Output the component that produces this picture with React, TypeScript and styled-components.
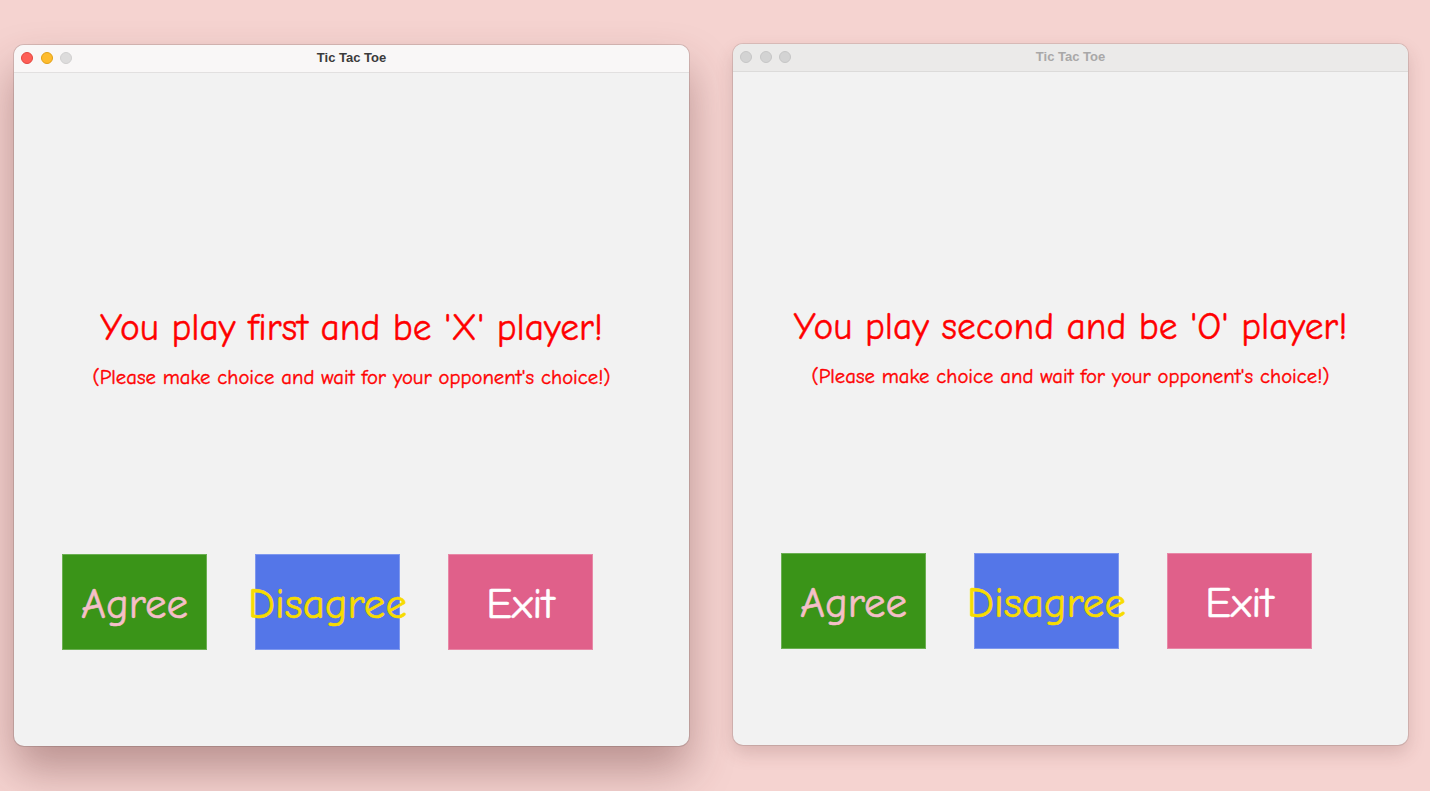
import styled, { createGlobalStyle } from "styled-components"

const GlobalStyle = createGlobalStyle`
  html, body {
    margin: 0;
    padding: 0;
    background: #ffffff;
  }
  body {
    font-family: "Liberation Sans", Arial, sans-serif;
  }
`

const comic = `"Comic Sans MS", "Comic Neue", "DejaVu Sans", sans-serif`

interface WindowProps {
  title: string
  active: boolean
  heading: string
}

function GameWindow({ title, active, heading }: WindowProps) {
  return (
    <Window $active={active}>
      <TitleBar $active={active}>
        <Lights>
          <Light $color={active ? "#fe5f57" : "#d3d3d3"} $border={active ? "#e2463f" : "#c6c6c6"} />
          <Light $color={active ? "#febc2e" : "#d3d3d3"} $border={active ? "#e1a116" : "#c6c6c6"} />
          <Light $color={active ? "#dddcdc" : "#d3d3d3"} $border={active ? "#d0cfcf" : "#c6c6c6"} />
        </Lights>
        <Title $active={active}>{title}</Title>
      </TitleBar>
      <Content>
        <Heading>{heading}</Heading>
        <SubHeading>(Please make choice and wait for your opponent's choice!)</SubHeading>
        <ButtonRow>
          <ChoiceButton $bg="#3a9418" $fg="#f5bfc8">Agree</ChoiceButton>
          <ChoiceButton $bg="#5476e8" $fg="#f7dc00">Disagree</ChoiceButton>
          <ChoiceButton $bg="#e0608a" $fg="#ffffff">Exit</ChoiceButton>
        </ButtonRow>
      </Content>
    </Window>
  )
}

export default function App() {
  return (
    <>
      <GlobalStyle />
      <Desktop>
        <GameWindow title="Tic Tac Toe" active heading="You play first and be 'X' player!" />
        <GameWindow title="Tic Tac Toe" active={false} heading="You play second and be 'O' player!" />
      </Desktop>
    </>
  )
}

const Desktop = styled.div`
  height: 791px;
  box-sizing: border-box;
  background: #f5d3d0;
  display: flex;
  align-items: flex-start;
  gap: 44px;
  padding: 44px 0 0 14px;
  overflow: hidden;
`

const Window = styled.div<{ $active: boolean }>`
  width: 675px;
  height: 701px;
  margin-top: ${(p) => (p.$active ? "1px" : "0")};
  border-radius: 10px;
  overflow: hidden;
  background: #f2f2f2;
  display: flex;
  flex-direction: column;
  flex-shrink: 0;
  box-shadow: ${(p) =>
    p.$active
      ? "0 0 0 1px rgba(0,0,0,0.12), 0 24px 44px rgba(90,40,40,0.38)"
      : "0 0 0 1px rgba(0,0,0,0.1), 0 8px 18px rgba(90,40,40,0.18)"};
`

const TitleBar = styled.div<{ $active: boolean }>`
  height: 27px;
  flex-shrink: 0;
  position: relative;
  display: flex;
  align-items: center;
  justify-content: center;
  background: ${(p) => (p.$active ? "#f9f7f7" : "#ebeae9")};
  border-bottom: 1px solid ${(p) => (p.$active ? "#e2e0e0" : "#dcdbda")};
`

const Lights = styled.div`
  position: absolute;
  left: 7px;
  top: 7px;
  display: flex;
  gap: 7.5px;
`

const Light = styled.span<{ $color: string; $border: string }>`
  width: 12px;
  height: 12px;
  box-sizing: border-box;
  border-radius: 50%;
  background: ${(p) => p.$color};
  border: 0.5px solid ${(p) => p.$border};
`

const Title = styled.div<{ $active: boolean }>`
  font-family: "Liberation Sans", Arial, sans-serif;
  font-weight: 700;
  font-size: 13px;
  margin-top: -2px;
  color: ${(p) => (p.$active ? "#3b3b3b" : "#a9a8a8")};
`

const Content = styled.div`
  flex: 1;
  display: flex;
  flex-direction: column;
  align-items: center;
  padding-top: 233px;
  font-family: ${comic};
  color: #ff0000;
  -webkit-text-stroke: 0.4px currentColor;
`

const Heading = styled.div`
  font-size: 37.4px;
  line-height: 44px;
  white-space: nowrap;
`

const SubHeading = styled.div`
  margin-top: 14px;
  font-size: 20.7px;
  line-height: 26px;
  white-space: nowrap;
`

const ButtonRow = styled.div`
  align-self: stretch;
  display: flex;
  gap: 48px;
  padding-left: 48px;
  margin-top: 164px;
`

const ChoiceButton = styled.div<{ $bg: string; $fg: string }>`
  width: 145px;
  height: 96px;
  box-sizing: border-box;
  display: flex;
  align-items: center;
  justify-content: center;
  background: ${(p) => p.$bg};
  color: ${(p) => p.$fg};
  border: 1px solid rgba(255, 255, 255, 0.25);
  font-family: ${comic};
  font-size: 43px;
  white-space: nowrap;
  padding-top: 4px;
  -webkit-text-stroke: 0.6px currentColor;
`
